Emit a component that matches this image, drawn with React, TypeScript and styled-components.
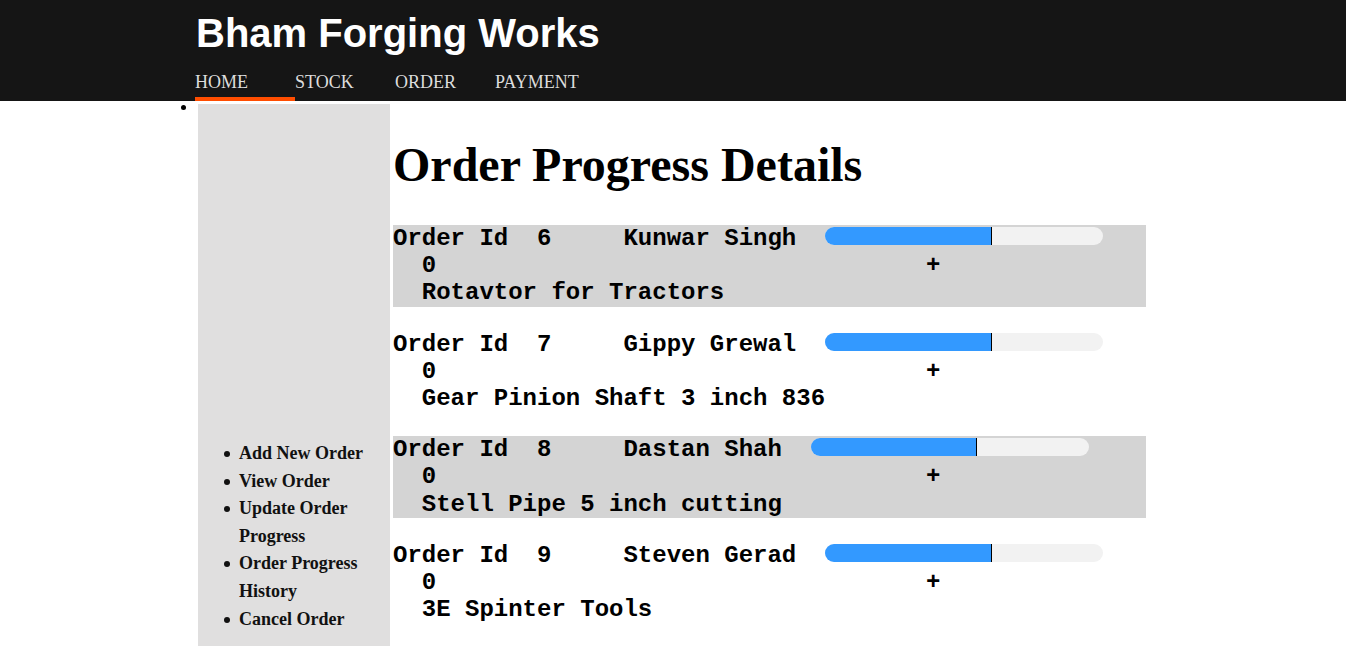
import React from "react";
import styled, { createGlobalStyle } from "styled-components";

const GlobalStyle = createGlobalStyle`
  html, body {
    margin: 0;
    padding: 0;
    background: #ffffff;
    font-family: "Liberation Serif", "Times New Roman", serif;
    overflow: hidden;
  }
`;

const Header = styled.header`
  background: #151515;
  padding-left: 195px;
`;

const Title = styled.h1`
  margin: 0;
  padding-top: 13px;
  padding-left: 1px;
  font-family: "Liberation Sans", Arial, sans-serif;
  font-weight: bold;
  font-size: 40px;
  line-height: 40px;
  color: #ffffff;
`;

const Nav = styled.nav`
  display: flex;
`;

const NavItem = styled.a<{ $active?: boolean }>`
  display: block;
  width: 100px;
  padding-top: 19px;
  padding-bottom: 4px;
  border-bottom: 4px solid ${(p) => (p.$active ? "#ff4d00" : "transparent")};
  font-family: "Liberation Serif", "Times New Roman", serif;
  font-size: 18px;
  line-height: 21px;
  color: #dddddd;
  text-decoration: none;
  text-transform: uppercase;
`;

const Body = styled.div`
  display: flex;
  align-items: flex-start;
  padding-left: 181px;
`;

const Dot = styled.span`
  flex: none;
  width: 5px;
  height: 5px;
  margin-top: 4px;
  margin-right: 12px;
  border-radius: 50%;
  background: #000;
`;

const Sidebar = styled.aside`
  flex: none;
  width: 192px;
  height: 560px;
  margin-top: 3px;
  padding-top: 336px;
  box-sizing: border-box;
  background: #e0dfdf;
`;

const SideList = styled.ul`
  margin: 0;
  padding-left: 41px;
  padding-right: 12px;
  list-style: none;
`;

const SideItem = styled.li`
  position: relative;
  font-family: "Liberation Serif", "Times New Roman", serif;
  font-weight: bold;
  font-size: 18px;
  line-height: 27.6px;
  color: #111;

  &::before {
    content: "";
    position: absolute;
    left: -15px;
    top: 11px;
    width: 6px;
    height: 6px;
    border-radius: 50%;
    background: #111;
  }
`;

const Main = styled.main`
  flex: none;
  width: 753px;
  margin-left: 3px;
  margin-top: 3px;
`;

const Heading = styled.h1`
  margin: 33px 0 32px 0;
  font-family: "Liberation Serif", "Times New Roman", serif;
  font-weight: bold;
  font-size: 48px;
  line-height: 56px;
  color: #000;
`;

const OrderRow = styled.div<{ $shaded?: boolean }>`
  background: ${(p) => (p.$shaded ? "#d4d4d4" : "transparent")};
  margin-bottom: 24px;
  font-family: "Liberation Mono", "Courier New", monospace;
  font-weight: bold;
  font-size: 24px;
  line-height: 27.2px;
  color: #000;
`;

const Line = styled.div`
  white-space: pre;
`;

const Track = styled.span`
  display: inline-block;
  vertical-align: baseline;
  width: 278px;
  height: 18px;
  border-radius: 9px;
  background: #f2f2f2;
  overflow: hidden;
`;

const Fill = styled.span`
  display: block;
  height: 100%;
  box-sizing: border-box;
  background: #3399ff;
  border-right: 1px solid #000;
`;

type Order = { id: number; name: string; item: string; progress: number };

const orders: Order[] = [
  { id: 6, name: "Kunwar Singh", item: "Rotavtor for Tractors", progress: 0.6 },
  { id: 7, name: "Gippy Grewal", item: "Gear Pinion Shaft 3 inch 836", progress: 0.6 },
  { id: 8, name: "Dastan Shah", item: "Stell Pipe 5 inch cutting", progress: 0.6 },
  { id: 9, name: "Steven Gerad", item: "3E Spinter Tools", progress: 0.6 },
];

const sideLinks = [
  "Add New Order",
  "View Order",
  "Update Order Progress",
  "Order Progress History",
  "Cancel Order",
];

export default function App() {
  return (
    <>
      <GlobalStyle />
      <Header>
        <Title>Bham Forging Works</Title>
        <Nav>
          <NavItem $active>Home</NavItem>
          <NavItem>Stock</NavItem>
          <NavItem>Order</NavItem>
          <NavItem>Payment</NavItem>
        </Nav>
      </Header>
      <Body>
        <Dot />
        <Sidebar>
          <SideList>
            {sideLinks.map((l) => (
              <SideItem key={l}>{l}</SideItem>
            ))}
          </SideList>
        </Sidebar>
        <Main>
          <Heading>Order Progress Details</Heading>
          {orders.map((o, i) => (
            <OrderRow key={o.id} $shaded={i % 2 === 0}>
              <Line>
                {`Order Id  ${o.id}     ${o.name}  `}
                <Track>
                  <Fill style={{ width: `${o.progress * 100}%` }} />
                </Track>
              </Line>
              <Line>{"  0" + " ".repeat(34) + "+"}</Line>
              <Line>{"  " + o.item}</Line>
            </OrderRow>
          ))}
        </Main>
      </Body>
    </>
  );
}
